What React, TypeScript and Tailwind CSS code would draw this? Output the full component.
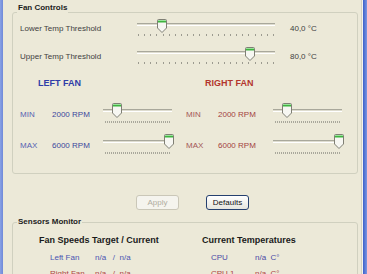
import React from "react";

function Thumb({ h }: { h: number }) {
  const side = h - 5;
  const tip = h - 0.5;
  return (
    <svg width="10" height={h} viewBox={`0 0 10 ${h}`} className="block">
      <path
        d={`M1.5 0.5 H8.5 Q9.5 0.5 9.5 1.5 V${side} L5 ${tip} L0.5 ${side} V1.5 Q0.5 0.5 1.5 0.5 Z`}
        fill="#f7f7f2"
        stroke="#7f7f74"
      />
      <rect x="1" y="1" width="8" height="1" fill="#9be29b" />
      <rect x="1" y="2" width="8" height="1.5" fill="#3fb43f" />
    </svg>
  );
}

function Ticks({ w, dense }: { w: number; dense: boolean }) {
  const xs: number[] = [];
  if (dense) {
    for (let x = 2; x <= w - 2; x += 2) xs.push(x);
  } else {
    const n = 23;
    for (let i = 0; i < n; i++) xs.push(Math.round(1 + (i * (w - 3)) / (n - 1)));
  }
  return (
    <svg width={w} height="2" className="block">
      {xs.map((x) => (
        <rect key={x} x={x} y="0" width="1" height="2" fill={dense ? "#a9a89c" : "#9c9b90"} />
      ))}
    </svg>
  );
}

function TempSlider({ pos }: { pos: number }) {
  return (
    <div className="relative w-[138px] h-[17px] shrink-0">
      <div className="mt-[4px] h-[3px] border-t border-b border-t-[#a9a89b] border-b-white bg-[#dedccf]" />
      <div className="mt-[8px]">
        <Ticks w={138} dense={false} />
      </div>
      <div className="absolute top-0" style={{ left: pos - 5 }}>
        <Thumb h={14} />
      </div>
    </div>
  );
}

function FanSlider({ pos }: { pos: number }) {
  return (
    <div className="relative w-[69px] h-[20px] shrink-0">
      <div className="mt-[6px] h-[3px] border-t border-b border-t-[#a9a89b] border-b-white bg-[#dedccf]" />
      <div className="mt-[9px]">
        <Ticks w={69} dense={true} />
      </div>
      <div className="absolute top-0" style={{ left: pos - 5 }}>
        <Thumb h={15} />
      </div>
    </div>
  );
}

function TempRow({ label, value, pos }: { label: string; value: string; pos: number }) {
  return (
    <div className="flex items-start h-[17px] pl-[7px]">
      <div className="w-[117px] mt-[5px] text-[#404040]">{label}</div>
      <TempSlider pos={pos} />
      <div className="ml-[15px] mt-[5px] whitespace-pre text-[#404040]">{value}</div>
    </div>
  );
}

function FanRow({
  label,
  value,
  pos,
  labelW,
  valueW,
  labelColor,
  valueColor,
}: {
  label: string;
  value: string;
  pos: number;
  labelW: string;
  valueW: string;
  labelColor: string;
  valueColor: string;
}) {
  return (
    <div className="flex items-start h-[20px]">
      <div className={`${labelW} ${labelColor} mt-[7px]`}>{label}</div>
      <div className={`${valueW} ${valueColor} mt-[7px]`}>{value}</div>
      <FanSlider pos={pos} />
    </div>
  );
}

export default function App() {
  return (
    <div className="w-[367px] h-[274px] overflow-hidden bg-[#ece9d8] flex font-['Liberation_Sans',Arial,sans-serif] text-[8px] leading-[10px]">
      <div className="w-[3px] shrink-0 bg-gradient-to-r from-[#8aa2e4] to-[#6f89d9]" />
      <div className="w-[358px] shrink-0 flex flex-col">
        {/* Fan Controls */}
        <div className="relative mt-[12px] ml-[9px] w-[346px] border border-[#d0d0bf] rounded-[3px] pt-[6px] pb-[19px]">
          <span className="absolute left-[4px] top-[-10px] px-[1px] bg-[#ece9d8] font-bold text-[#1c1c1c]">
            Fan Controls
          </span>
          <TempRow label="Lower Temp Threshold" value="40,0 °C" pos={25} />
          <div className="mt-[11px]">
            <TempRow label="Upper Temp Threshold" value="80,0 °C" pos={113} />
          </div>
          <div className="flex mt-[14px] pl-[7px]">
            <div className="w-[152px]">
              <div className="pl-[18px] font-bold text-[9px] leading-[11px] text-[#2f3ca8]">LEFT FAN</div>
              <div className="mt-[14px]">
                <FanRow
                  label="MIN"
                  value="2000 RPM"
                  pos={14}
                  labelW="w-[32px]"
                  valueW="w-[51px]"
                  labelColor="text-[#5561b3]"
                  valueColor="text-[#3b479c]"
                />
              </div>
              <div className="mt-[11px]">
                <FanRow
                  label="MAX"
                  value="6000 RPM"
                  pos={66}
                  labelW="w-[32px]"
                  valueW="w-[51px]"
                  labelColor="text-[#5561b3]"
                  valueColor="text-[#3b479c]"
                />
              </div>
            </div>
            <div className="ml-[14px] w-[156px]">
              <div className="pl-[19px] font-bold text-[9px] leading-[11px] text-[#b3352d]">RIGHT FAN</div>
              <div className="mt-[14px]">
                <FanRow
                  label="MIN"
                  value="2000 RPM"
                  pos={14}
                  labelW="w-[32px]"
                  valueW="w-[55px]"
                  labelColor="text-[#a35757]"
                  valueColor="text-[#a33f3f]"
                />
              </div>
              <div className="mt-[11px]">
                <FanRow
                  label="MAX"
                  value="6000 RPM"
                  pos={66}
                  labelW="w-[32px]"
                  valueW="w-[55px]"
                  labelColor="text-[#a35757]"
                  valueColor="text-[#a33f3f]"
                />
              </div>
            </div>
          </div>
        </div>

        {/* Buttons */}
        <div className="flex mt-[21px] pl-[133px] gap-[27px]">
          <div className="w-[43px] h-[15px] rounded-[3px] border border-[#cac7b8] bg-[#f5f4ee] text-[#b0ad9f] flex items-center justify-center">
            Apply
          </div>
          <div className="w-[43px] h-[15px] rounded-[3px] border border-[#25406f] bg-gradient-to-b from-white to-[#e6e5de] text-[#111] flex items-center justify-center">
            Defaults
          </div>
        </div>

        {/* Sensors Monitor */}
        <div className="relative mt-[12px] ml-[9px] w-[346px] h-[80px] shrink-0 border border-[#d0d0bf] rounded-[3px]">
          <span className="absolute left-[4px] top-[-6px] px-[1px] bg-[#ece9d8] font-bold text-[#1c1c1c]">
            Sensors Monitor
          </span>
          <div className="flex pl-[26px] pt-[12px]">
            <div className="w-[163px]">
              <div className="font-bold text-[9px] leading-[11px] text-[#1a1a1a]">Fan Speeds Target / Current</div>
              <div className="flex mt-[6px] pl-[11px] leading-[11px] text-[#4a55b2]">
                <span className="w-[45px]">Left Fan</span>
                <span className="whitespace-pre">n/a   /  n/a</span>
              </div>
              <div className="flex mt-[5px] pl-[11px] leading-[11px] text-[#b04545]">
                <span className="w-[45px]">Right Fan</span>
                <span className="whitespace-pre">n/a   /  n/a</span>
              </div>
            </div>
            <div>
              <div className="font-bold text-[9px] leading-[11px] text-[#1a1a1a]">Current Temperatures</div>
              <div className="flex mt-[6px] pl-[9px] leading-[11px] text-[#4a4aa6]">
                <span className="w-[44px]">CPU</span>
                <span className="whitespace-pre">n/a  C°</span>
              </div>
              <div className="flex mt-[5px] pl-[9px] leading-[11px] text-[#b04545]">
                <span className="w-[44px]">CPU 1</span>
                <span className="whitespace-pre">n/a  C°</span>
              </div>
            </div>
          </div>
        </div>
      </div>
      <div className="w-[1px] shrink-0 bg-[#d3d1c3]" />
      <div className="w-[1px] shrink-0 bg-[#f4f3ec]" />
      <div className="w-[4px] shrink-0 bg-gradient-to-r from-[#3d5fc9] to-[#7b96e2]" />
    </div>
  );
}
